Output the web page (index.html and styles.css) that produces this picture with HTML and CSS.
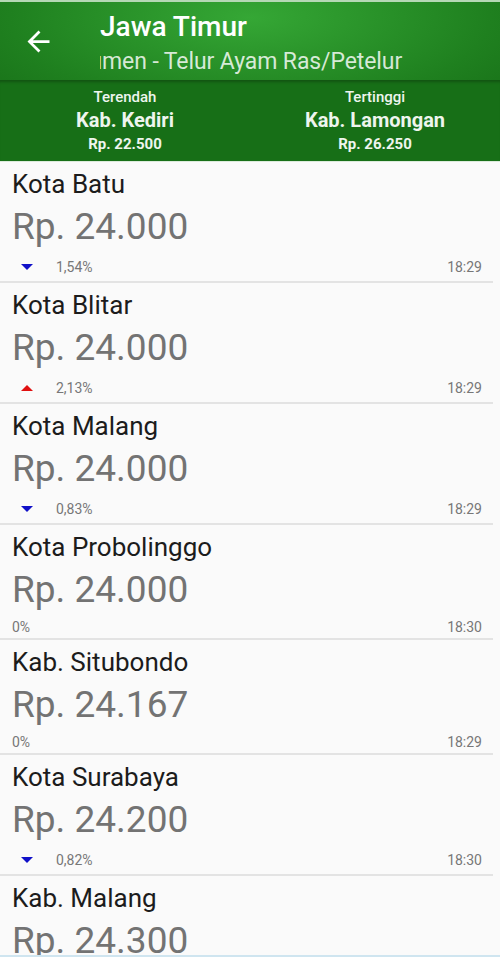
FILE: index.html
```html
<!DOCTYPE html>
<html lang="id">
<head>
    <meta charset="UTF-8">
    <meta name="viewport" content="width=device-width, initial-scale=1.0">
    <title>Jawa Timur</title>
    <link rel="stylesheet" href="styles.css">
</head>
<body>
    <div class="layar">
        <div class="garis-atas"></div>
        <header class="toolbar">
            <button class="tombol-kembali" aria-label="Kembali">
                <svg width="33" height="33" viewBox="0 0 24 24">
                    <path d="M20 11H7.83l5.59-5.59L12 4l-8 8 8 8 1.41-1.41L7.83 13H20v-2z" fill="#fff"/>
                </svg>
            </button>
            <div class="judul">
                <h1>Jawa Timur</h1>
                <div class="subjudul"><span>Harga Konsumen - Telur Ayam Ras/Petelur</span></div>
            </div>
        </header>

        <div class="ringkasan">
            <div class="kolom">
                <p class="label">Terendah</p>
                <p class="daerah">Kab. Kediri</p>
                <p class="nilai">Rp. 22.500</p>
            </div>
            <div class="kolom">
                <p class="label">Tertinggi</p>
                <p class="daerah">Kab. Lamongan</p>
                <p class="nilai">Rp. 26.250</p>
            </div>
        </div>

        <ul class="daftar">
            <li class="item">
                <p class="nama">Kota Batu</p>
                <p class="harga">Rp. 24.000</p>
                <div class="info">
                    <span class="ubah"><i class="panah turun"></i>1,54%</span>
                    <span class="jam">18:29</span>
                </div>
            </li>
            <li class="item">
                <p class="nama">Kota Blitar</p>
                <p class="harga">Rp. 24.000</p>
                <div class="info">
                    <span class="ubah"><i class="panah naik"></i>2,13%</span>
                    <span class="jam">18:29</span>
                </div>
            </li>
            <li class="item">
                <p class="nama">Kota Malang</p>
                <p class="harga">Rp. 24.000</p>
                <div class="info">
                    <span class="ubah"><i class="panah turun"></i>0,83%</span>
                    <span class="jam">18:29</span>
                </div>
            </li>
            <li class="item">
                <p class="nama">Kota Probolinggo</p>
                <p class="harga">Rp. 24.000</p>
                <div class="info tetap">
                    <span class="ubah">0%</span>
                    <span class="jam">18:30</span>
                </div>
            </li>
            <li class="item">
                <p class="nama">Kab. Situbondo</p>
                <p class="harga">Rp. 24.167</p>
                <div class="info tetap">
                    <span class="ubah">0%</span>
                    <span class="jam">18:29</span>
                </div>
            </li>
            <li class="item">
                <p class="nama">Kota Surabaya</p>
                <p class="harga">Rp. 24.200</p>
                <div class="info">
                    <span class="ubah"><i class="panah turun"></i>0,82%</span>
                    <span class="jam">18:30</span>
                </div>
            </li>
            <li class="item">
                <p class="nama">Kab. Malang</p>
                <p class="harga">Rp. 24.300</p>
                <div class="info">
                    <span class="ubah"><i class="panah naik"></i>0,41%</span>
                    <span class="jam">18:30</span>
                </div>
            </li>
        </ul>
        <div class="garis-bawah"></div>
    </div>
</body>
</html>
```

FILE: styles.css
```css
*{
    margin: 0;
    padding: 0;
    box-sizing: border-box;
}
body{
    font-family: Roboto, "Noto Sans", sans-serif;
    background-color: #fafafa;
    color: #212121;
}
.layar{
    display: flex;
    flex-direction: column;
    height: 957px;
    overflow: hidden;
}
.garis-atas{
    height: 2px;
    flex-shrink: 0;
    background-color: #b5d8b5;
}
.toolbar{
    height: 78px;
    flex-shrink: 0;
    display: flex;
    background: radial-gradient(ellipse 60% 140% at 50% 20%, #35a735, #1f801f 80%, #1b771b);
    color: white;
}
.tombol-kembali{
    width: 100px;
    height: 78px;
    padding-left: 22px;
    display: flex;
    align-items: center;
    background: none;
    border: none;
}
.judul{
    flex: 1;
    overflow: hidden;
    padding-top: 9px;
}
.judul h1{
    font-size: 28px;
    font-weight: 500;
    line-height: 32px;
}
.subjudul{
    margin-top: 5px;
    font-size: 23px;
    line-height: 28px;
    color: rgba(255, 255, 255, 0.82);
    white-space: nowrap;
    overflow: hidden;
}
.subjudul span{
    display: inline-block;
    margin-left: -129px;
    letter-spacing: -0.1px;
}
.ringkasan{
    height: 82px;
    flex-shrink: 0;
    display: flex;
    background-color: #176f17;
    box-shadow: inset 0 4px 3px -2px rgba(0, 0, 0, 0.25);
    color: #eef5ee;
    text-align: center;
    border-bottom: 1px solid #dcebdc;
}
.kolom{
    flex: 1;
    padding-top: 7px;
}
.kolom .label{
    font-size: 15px;
    font-weight: 500;
    line-height: 20px;
}
.kolom .daerah{
    font-size: 20px;
    font-weight: 700;
    line-height: 27px;
}
.kolom .nilai{
    font-size: 15px;
    font-weight: 700;
    line-height: 20px;
}
.daftar{
    list-style: none;
    flex: 1;
    overflow: hidden;
}
.item{
    padding: 7px 18px 0 12px;
    border-bottom: 2px solid #e3e3e3;
    margin-right: 7px;
}
.item .nama{
    font-size: 26px;
    line-height: 30px;
    color: #1c1c1c;
}
.item .harga{
    margin-top: 2px;
    font-size: 37px;
    line-height: 52px;
    color: #737373;
}
.info{
    display: flex;
    justify-content: space-between;
    align-items: center;
    height: 28px;
    margin-right: -7px;
    font-size: 14px;
    color: #777;
}
.info.tetap{
    height: 22px;
}
.ubah{
    display: flex;
    align-items: center;
}
.panah{
    width: 0;
    height: 0;
    margin: 0 23px 0 9px;
    border-left: 6px solid transparent;
    border-right: 6px solid transparent;
}
.panah.turun{
    border-top: 6px solid #1010c8;
}
.panah.naik{
    border-bottom: 6px solid #e01010;
}
.garis-bawah{
    height: 2px;
    flex-shrink: 0;
    background-color: #cfe5f0;
}
```
